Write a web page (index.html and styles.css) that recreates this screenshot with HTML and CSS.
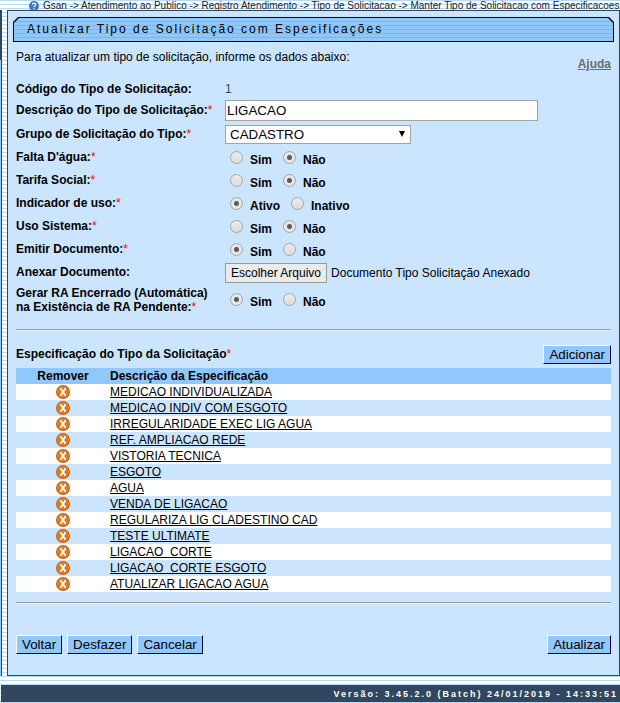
FILE: index.html
```html
<!DOCTYPE html>
<html lang="pt-BR">
<head>
<meta charset="utf-8">
<title>Atualizar Tipo de Solicitação com Especificações</title>
<link rel="stylesheet" href="styles.css">
</head>
<body>
<svg class="defs" aria-hidden="true">
  <symbol id="remove" viewBox="0 0 14 14">
    <circle cx="7" cy="7" r="7" fill="#b9601c"/>
    <circle cx="6.8" cy="6.8" r="6.2" fill="#e07a22"/>
    <path d="M4.4 3.2 9.6 10.8M9.6 3.2 4.4 10.8" stroke="#fff" stroke-width="1.8"/>
  </symbol>
</svg>
<header class="breadcrumb">
  <svg class="help-icon" viewBox="0 0 10 10" aria-hidden="true">
    <circle cx="5" cy="5" r="5" fill="#3f78c4"/>
    <path d="M3.4 3.8C3.4 1.7 6.7 1.7 6.7 3.7 6.7 4.8 5 4.8 5 6.2M5 7.2v1.2" fill="none" stroke="#fff" stroke-width="1.2"/>
  </svg>
  <span>Gsan -&gt; Atendimento ao Publico -&gt; Registro Atendimento -&gt; Tipo de Solicitacao -&gt; Manter Tipo de Solicitacao com Especificacoes</span>
</header>
<div class="page">
  <aside class="sidebar"></aside>
  <main class="panel">
    <div class="title"><h1>Atualizar Tipo de Solicitação com Especificações</h1></div>
    <form class="content">
      <div class="intro">
        <p>Para atualizar um tipo de solicitação, informe os dados abaixo:</p>
        <a class="help" href="#">Ajuda</a>
      </div>
      <div class="row row-code"><span class="name">Código do Tipo de Solicitação:</span><span class="code">1</span></div>
      <div class="row row-text"><label class="name" for="descricao">Descrição do Tipo de Solicitação:<i>*</i></label><input class="text" id="descricao" type="text" value="LIGACAO"></div>
      <div class="row"><label class="name" for="grupo">Grupo de Solicitação do Tipo:<i>*</i></label>
        <span class="select"><select id="grupo"><option>CADASTRO</option></select></span></div>
      <div class="row" role="radiogroup" aria-labelledby="n1"><span class="name" id="n1">Falta D'água:<i>*</i></span>
        <div class="radios"><label><input type="radio" name="falta"><span>Sim</span></label><label><input type="radio" name="falta" checked><span>Não</span></label></div></div>
      <div class="row" role="radiogroup" aria-labelledby="n2"><span class="name" id="n2">Tarifa Social:<i>*</i></span>
        <div class="radios"><label><input type="radio" name="tarifa"><span>Sim</span></label><label><input type="radio" name="tarifa" checked><span>Não</span></label></div></div>
      <div class="row" role="radiogroup" aria-labelledby="n3"><span class="name" id="n3">Indicador de uso:<i>*</i></span>
        <div class="radios"><label><input type="radio" name="uso" checked><span>Ativo</span></label><label><input type="radio" name="uso"><span>Inativo</span></label></div></div>
      <div class="row" role="radiogroup" aria-labelledby="n4"><span class="name" id="n4">Uso Sistema:<i>*</i></span>
        <div class="radios"><label><input type="radio" name="sistema"><span>Sim</span></label><label><input type="radio" name="sistema" checked><span>Não</span></label></div></div>
      <div class="row" role="radiogroup" aria-labelledby="n5"><span class="name" id="n5">Emitir Documento:<i>*</i></span>
        <div class="radios"><label><input type="radio" name="emitir" checked><span>Sim</span></label><label><input type="radio" name="emitir"><span>Não</span></label></div></div>
      <div class="row"><span class="name">Anexar Documento:</span>
        <div class="file"><input class="file-input" id="anexo" type="file"><label class="file-button" for="anexo">Escolher Arquivo</label><span>Documento Tipo Solicitação Anexado</span></div></div>
      <div class="row row-double" role="radiogroup" aria-labelledby="n6"><span class="name" id="n6">Gerar RA Encerrado (Automática)<br>na Existência de RA Pendente:<i>*</i></span>
        <div class="radios"><label><input type="radio" name="gerar" checked><span>Sim</span></label><label><input type="radio" name="gerar"><span>Não</span></label></div></div>
      <hr>
      <div class="list-head">
        <h2 class="name">Especificação do Tipo da Solicitação<i>*</i></h2>
        <button class="btn" type="button">Adicionar</button>
      </div>
      <table class="list">
        <thead><tr><th class="remove">Remover</th><th>Descrição da Especificação</th></tr></thead>
        <tbody>
          <tr><td class="remove"><button type="button" aria-label="Remover"><svg><use href="#remove"/></svg></button></td><td><a href="#">MEDICAO INDIVIDUALIZADA</a></td></tr>
          <tr><td class="remove"><button type="button" aria-label="Remover"><svg><use href="#remove"/></svg></button></td><td><a href="#">MEDICAO INDIV COM ESGOTO</a></td></tr>
          <tr><td class="remove"><button type="button" aria-label="Remover"><svg><use href="#remove"/></svg></button></td><td><a href="#">IRREGULARIDADE EXEC LIG AGUA</a></td></tr>
          <tr><td class="remove"><button type="button" aria-label="Remover"><svg><use href="#remove"/></svg></button></td><td><a href="#">REF. AMPLIACAO REDE</a></td></tr>
          <tr><td class="remove"><button type="button" aria-label="Remover"><svg><use href="#remove"/></svg></button></td><td><a href="#">VISTORIA TECNICA</a></td></tr>
          <tr><td class="remove"><button type="button" aria-label="Remover"><svg><use href="#remove"/></svg></button></td><td><a href="#">ESGOTO</a></td></tr>
          <tr><td class="remove"><button type="button" aria-label="Remover"><svg><use href="#remove"/></svg></button></td><td><a href="#">AGUA</a></td></tr>
          <tr><td class="remove"><button type="button" aria-label="Remover"><svg><use href="#remove"/></svg></button></td><td><a href="#">VENDA DE LIGACAO</a></td></tr>
          <tr><td class="remove"><button type="button" aria-label="Remover"><svg><use href="#remove"/></svg></button></td><td><a href="#">REGULARIZA LIG CLADESTINO CAD</a></td></tr>
          <tr><td class="remove"><button type="button" aria-label="Remover"><svg><use href="#remove"/></svg></button></td><td><a href="#">TESTE ULTIMATE</a></td></tr>
          <tr><td class="remove"><button type="button" aria-label="Remover"><svg><use href="#remove"/></svg></button></td><td><a href="#">LIGACAO&nbsp; CORTE</a></td></tr>
          <tr><td class="remove"><button type="button" aria-label="Remover"><svg><use href="#remove"/></svg></button></td><td><a href="#">LIGACAO&nbsp; CORTE ESGOTO</a></td></tr>
          <tr><td class="remove"><button type="button" aria-label="Remover"><svg><use href="#remove"/></svg></button></td><td><a href="#">ATUALIZAR LIGACAO AGUA</a></td></tr>
        </tbody>
      </table>
      <hr>
      <div class="actions">
        <button class="btn" type="button">Voltar</button>
        <button class="btn" type="reset">Desfazer</button>
        <button class="btn" type="button">Cancelar</button>
        <button class="btn submit" type="submit">Atualizar</button>
      </div>
    </form>
  </main>
</div>
<footer class="footer">Versão: 3.45.2.0 (Batch) 24/01/2019 - 14:33:51</footer>
</body>
</html>
```
FILE: styles.css
```css
* { box-sizing: border-box; }

body {
  margin: 0;
  overflow: hidden;
  font: 12px/14px "Liberation Sans", Arial, sans-serif;
  color: #000;
  background: #fff repeating-linear-gradient(#b9daf0 0 1px, #fff 1px 4px);
}

h1, h2, p { margin: 0; font-size: 12px; }

i { color: #f00; font-style: normal; font-weight: normal; }

.defs { display: none; }

.breadcrumb {
  display: flex;
  align-items: center;
  gap: 4px;
  height: 10px;
  padding: 2px 0 0 29px;
  font-size: 10px;
  line-height: 10px;
  white-space: nowrap;
  color: #222;
}

.help-icon { flex: none; width: 10px; height: 10px; }

.page { display: flex; gap: 5px; }

.sidebar {
  width: 2px;
  border-right: 1px solid #2f4760;
  background: linear-gradient(#2f4760 50px, #90c7fc 50px);
}

.panel {
  flex: 1;
  min-width: 0;
  padding: 6px 5px 21px;
  border: 1px solid #2f4760;
  background: #cbe5fe;
}

.title {
  padding: 1px;
  background: #000;
  clip-path: polygon(0 5px, 5px 0, calc(100% - 5px) 0, 100% 5px, 100% 100%, 0 100%);
}

.title h1 {
  padding: 4px 13px 5px;
  font-weight: normal;
  letter-spacing: 2px;
  background: repeating-linear-gradient(#90c7fc 0 3px, #7fb5e6 3px 4px);
  clip-path: polygon(0 5px, 5px 0, calc(100% - 5px) 0, 100% 5px, 100% 100%, 0 100%);
}

.content { padding: 0 3px; }

.intro {
  display: flex;
  justify-content: space-between;
  height: 38px;
  padding-top: 8px;
}

.help { padding-top: 7px; font-weight: bold; color: #6b6b6b; }

.row {
  display: grid;
  grid-template-columns: 209px 1fr;
  align-items: center;
  min-height: 23px;
}

.row-code { min-height: 18px; }
.row-text { min-height: 25px; }
.row-double { min-height: 32px; }

.name { padding-bottom: 2px; font-weight: bold; }
.row-code .name, .row-double .name { padding-bottom: 0; }

.code { color: #2f4760; }

.text {
  width: 313px;
  max-width: 100%;
  height: 21px;
  padding: 1px;
  border: 1px solid #a3a3a3;
  font-family: inherit;
}

.select { position: relative; width: 186px; height: 19px; }

.select select {
  display: block;
  width: 100%;
  height: 19px;
  padding: 0 4px;
  border: 1px solid #a3a3a3;
  font-family: inherit;
  color: #000;
  background: #fff;
  appearance: none;
}

.select::after {
  content: "";
  position: absolute;
  top: 6px;
  right: 6px;
  border: solid transparent;
  border-width: 6px 3px 0;
  border-top-color: #000;
  pointer-events: none;
}

.radios { display: flex; gap: 11px; padding-left: 5px; font-weight: bold; }

.radios label { display: flex; align-items: flex-start; gap: 7px; }

.radios span { padding-top: 4px; }

.radios input {
  width: 13px;
  height: 13px;
  margin: 2px 0 0;
  border: 1px solid #a6a6a6;
  border-radius: 50%;
  background: linear-gradient(#ececec, #dcdcdc);
  appearance: none;
}

.radios input:checked {
  background: radial-gradient(circle, #5c5c5c 0 2px, #e6e6e6 3px);
}

.file { display: flex; align-items: center; gap: 4px; position: relative; }

.file-input { position: absolute; width: 1px; height: 1px; opacity: 0; }

.file-button {
  padding: 2px 5px;
  border: 1px solid #9a9a9a;
  background: #ebebeb;
}

hr {
  margin: 13px 0 14px;
  border: 0;
  border-top: 1px solid #9a9a9a;
  border-bottom: 1px solid #eee;
}

.list-head {
  display: flex;
  align-items: center;
  justify-content: space-between;
  padding-bottom: 4px;
}

.btn {
  height: 19px;
  padding: 0 5px;
  border: 1px solid;
  border-color: #fff #000040 #000040 #fff;
  font-family: inherit;
  line-height: 15px;
  color: #000;
  background: #90c7fc;
}

.list { width: 100%; border-collapse: collapse; }

.list tr { height: 16px; background: #cbe5fe; }
.list thead tr { background: #90c7fc; }
.list tbody tr:nth-child(odd) { background: #fff; }
.list th, .list td { padding: 0; text-align: left; }
.list .remove { width: 94px; text-align: center; }
.list a { color: #000; }

.list button {
  display: block;
  width: 14px;
  height: 14px;
  margin: 0 auto;
  padding: 0;
  border: 0;
  background: none;
}

.list svg { display: block; width: 14px; height: 14px; }

.list + hr { margin: 10px 0 31px; }

.actions { display: flex; gap: 5px; }

.submit { margin-left: auto; }

.footer {
  margin: 9px 0 0 1px;
  padding: 2px 2px 1px;
  font-size: 9px;
  font-weight: bold;
  letter-spacing: 2px;
  text-align: right;
  color: #fff;
  background: #30475f;
}
```
